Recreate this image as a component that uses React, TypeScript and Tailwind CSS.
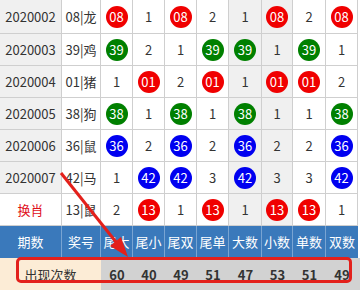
import React from 'react';

type Ball = { n: string; c: 'r' | 'g' | 'b' };
type Cell = string | Ball;

interface Row {
  qi: string;
  hao: string;
  cells: Cell[];
}

const R = (n: string): Ball => ({ n, c: 'r' });
const G = (n: string): Ball => ({ n, c: 'g' });
const B = (n: string): Ball => ({ n, c: 'b' });

const rows: Row[] = [
  { qi: '2020002', hao: '08|龙', cells: [R('08'), '1', R('08'), '2', '1', R('08'), '2', R('08')] },
  { qi: '2020003', hao: '39|鸡', cells: [G('39'), '2', '1', G('39'), G('39'), '1', G('39'), '1'] },
  { qi: '2020004', hao: '01|猪', cells: ['1', R('01'), '2', R('01'), '1', R('01'), R('01'), '2'] },
  { qi: '2020005', hao: '38|狗', cells: [G('38'), '1', G('38'), '1', G('38'), '1', '1', G('38')] },
  { qi: '2020006', hao: '36|鼠', cells: [B('36'), '2', B('36'), '2', B('36'), '2', '2', B('36')] },
  { qi: '2020007', hao: '42|马', cells: ['1', B('42'), B('42'), '3', B('42'), '3', '3', B('42')] },
];

const swap: Row = { qi: '换肖', hao: '13|鼠', cells: ['2', R('13'), '1', R('13'), '1', R('13'), R('13'), '1'] };

const headers = ['尾大', '尾小', '尾双', '尾单', '大数', '小数', '单数', '双数'];
const totals = ['60', '40', '49', '51', '47', '53', '51', '49'];

const cols = 'grid grid-cols-[62px_39px_32px_32px_32px_32px_33px_31px_33px_32px]';
const font = { fontFamily: '"Noto Sans CJK SC", "Noto Sans", sans-serif' };

const ballColor = { r: 'bg-[#f00000]', g: 'bg-[#008000]', b: 'bg-[#0000f0]' };

function CellView({ cell, gray }: { cell: Cell; gray: boolean }) {
  return (
    <div
      className={`flex items-center justify-center border-r border-[#cfcfcf] ${gray ? 'bg-[#f0f0f0]' : 'bg-white'}`}
    >
      {typeof cell === 'string' ? (
        <span className="text-[13px] text-[#333]">{cell}</span>
      ) : (
        <span
          className={`w-[22px] h-[22px] rounded-full flex items-center justify-center text-white text-[13px] leading-none ${ballColor[cell.c]}`}
        >
          {cell.n}
        </span>
      )}
    </div>
  );
}

function DataRow({ row, first, red }: { row: Row; first?: boolean; red?: boolean }) {
  return (
    <div className={`${cols} ${first ? 'h-[34px]' : 'h-[32px]'} border-b border-[#cfcfcf]`}>
      <div
        className={`flex items-center justify-center border-r border-[#cfcfcf] text-[13px] ${
          red ? 'bg-white text-[#e0101a]' : 'bg-[#f0f0f0] text-[#333]'
        }`}
      >
        {row.qi}
      </div>
      <div className="flex items-center justify-center border-r border-[#cfcfcf] bg-white text-[13px] text-[#333]">
        {row.hao}
      </div>
      {row.cells.map((c, i) => (
        <CellView key={i} cell={c} gray={i === 4 || i === 5} />
      ))}
    </div>
  );
}

export default function App() {
  return (
    <div className="relative w-[360px] h-[296px] bg-white overflow-hidden" style={font}>
      <div className="w-[358px]">
        {rows.map((r, i) => (
          <DataRow key={r.qi} row={r} first={i === 0} />
        ))}
        <DataRow row={swap} red />
        <div className={`${cols} h-[32px] bg-[#3a79bb]`}>
          <div className="flex items-center justify-center border-r border-[#79a4d2] text-white text-[13px]">期数</div>
          <div className="flex items-center justify-center border-r border-[#79a4d2] text-white text-[13px]">奖号</div>
          {headers.map((h) => (
            <div key={h} className="flex items-center justify-center border-r border-[#79a4d2] text-white text-[13px] last:border-r-0">
              {h}
            </div>
          ))}
        </div>
      </div>
      <div className="flex h-[32px] w-[360px] bg-[#d2d2d2]">
        <div className="w-[101px] flex items-center justify-center bg-[#fcecd6] text-[13px] text-[#333] pt-[2px]">
          出现次数
        </div>
        <div className="grid grid-cols-[32px_32px_32px_32px_33px_31px_33px_32px]">
          {totals.map((t, i) => (
            <div key={i} className="flex items-center justify-center font-bold text-[13px] text-[#333] pt-[2px]">
              {t}
            </div>
          ))}
        </div>
      </div>

      {/* annotation: red box + arrow */}
      <div className="absolute left-[16px] top-[257px] w-[336px] h-[26px] border-[3px] border-[#e3201b] rounded-[5px]" />
      <svg className="absolute left-0 top-0" width="360" height="296" viewBox="0 0 360 296">
        <line x1="61" y1="173" x2="116" y2="242" stroke="#e3201b" strokeWidth="3" />
        <polygon points="128,257 121,237 110,246" fill="#e3201b" />
      </svg>
    </div>
  );
}
